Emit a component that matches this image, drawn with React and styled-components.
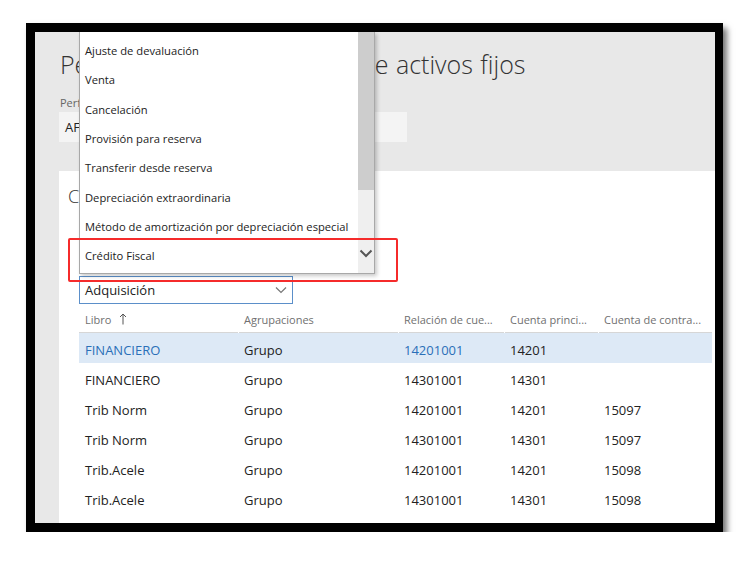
import React from 'react';
import styled, { createGlobalStyle } from 'styled-components';

const GlobalStyle = createGlobalStyle`
  body {
    margin: 0;
    background: #fff;
    font-family: "Open Sans", "Segoe UI", sans-serif;
    color: #222;
  }
`;

const menuItems = [
  'Ajuste de devaluación',
  'Venta',
  'Cancelación',
  'Provisión para reserva',
  'Transferir desde reserva',
  'Depreciación extraordinaria',
  'Método de amortización por depreciación especial',
  'Crédito Fiscal',
];

const columns = [
  { label: 'Libro', sort: true },
  { label: 'Agrupaciones' },
  { label: 'Relación de cue...' },
  { label: 'Cuenta princi...' },
  { label: 'Cuenta de contra...' },
];

const rows = [
  ['FINANCIERO', 'Grupo', '14201001', '14201', ''],
  ['FINANCIERO', 'Grupo', '14301001', '14301', ''],
  ['Trib Norm', 'Grupo', '14201001', '14201', '15097'],
  ['Trib Norm', 'Grupo', '14301001', '14301', '15097'],
  ['Trib.Acele', 'Grupo', '14201001', '14201', '15098'],
  ['Trib.Acele', 'Grupo', '14301001', '14301', '15098'],
];

export default function App() {
  return (
    <>
      <GlobalStyle />
      <Stage>
        <Frame>
          <Header>
            <Title>Perfiles de contabilización de activos fijos</Title>
            <FieldLabel>Perfil de contabilización</FieldLabel>
            <Input>AF01</Input>
          </Header>
          <Body>
            <Gutter />
            <Panel>
              <SectionTitle>Cuentas contables</SectionTitle>
              <Content>
                <Select>
                  <span>Adquisición</span>
                  <svg width="12" height="8" viewBox="0 0 12 8">
                    <path d="M1 1.5 L6 6.5 L11 1.5" fill="none" stroke="#777" strokeWidth="1.2" />
                  </svg>
                </Select>
                <Grid>
                  {columns.map((c, i) => (
                    <HeadCell key={c.label} first={i === 0}>
                      {c.label}
                      {c.sort && (
                        <SortArrow width="8" height="12" viewBox="0 0 8 12">
                          <path d="M4 11.5 V1 M1 4 L4 1 L7 4" fill="none" stroke="#555" strokeWidth="1" />
                        </SortArrow>
                      )}
                    </HeadCell>
                  ))}
                  {rows.map((r, ri) => (
                    <Row key={ri} selected={ri === 0}>
                      {r.map((v, ci) => (
                        <Cell key={ci} link={ri === 0 && (ci === 0 || ci === 2)}>
                          {v}
                        </Cell>
                      ))}
                    </Row>
                  ))}
                </Grid>
              </Content>
            </Panel>
          </Body>

          <Menu>
            <MenuList>
              {menuItems.map(m => (
                <MenuItem key={m}>{m}</MenuItem>
              ))}
            </MenuList>
            <ScrollBar>
              <Thumb />
              <ScrollDown>
                <svg width="14" height="9" viewBox="0 0 14 9">
                  <path d="M1.5 1.5 L7 7 L12.5 1.5" fill="none" stroke="#555" strokeWidth="2" />
                </svg>
              </ScrollDown>
            </ScrollBar>
          </Menu>
          <Highlight />
        </Frame>
      </Stage>
    </>
  );
}

const Stage = styled.div`
  padding: 23px 0 0 26px;
`;

const Frame = styled.div`
  position: relative;
  width: 680px;
  height: 491px;
  border: 9px solid #000;
  border-right-width: 8px;
  background: #e8e8e8;
  box-shadow: 4px 5px 6px rgba(0, 0, 0, 0.55);
  overflow: hidden;
  display: flex;
  flex-direction: column;
`;

const Header = styled.div`
  height: 139px;
  box-sizing: border-box;
  padding: 14px 0 0 24px;
  display: flex;
  flex-direction: column;
  align-items: flex-start;
`;

const Title = styled.div`
  font-size: 25px;
  font-weight: 300;
  word-spacing: 1px;
  line-height: 36px;
  color: #333;
  margin-left: 1px;
  white-space: nowrap;
`;

const FieldLabel = styled.div`
  margin-top: 14px;
  margin-left: 1px;
  font-size: 11px;
  color: #666;
  line-height: 14px;
`;

const Input = styled.div`
  margin-top: 2px;
  width: 348px;
  height: 30px;
  box-sizing: border-box;
  padding-left: 6px;
  background: #f4f4f4;
  font-size: 13px;
  line-height: 30px;
`;

const Body = styled.div`
  flex: 1;
  display: flex;
`;

const Gutter = styled.div`
  width: 24px;
`;

const Panel = styled.div`
  flex: 1;
  background: #fff;
  padding: 12px 3px 0 9px;
`;

const SectionTitle = styled.div`
  font-size: 18px;
  font-weight: 300;
  line-height: 26px;
  color: #333;
`;

const Content = styled.div`
  padding-left: 11px;
`;

const Select = styled.div`
  margin-top: 67px;
  width: 214px;
  height: 28px;
  box-sizing: border-box;
  border: 1px solid #5b8fc9;
  padding: 0 5px 0 5px;
  display: flex;
  align-items: center;
  justify-content: space-between;
  font-size: 13px;
  color: #222;
`;

const Grid = styled.div`
  display: grid;
  grid-template-columns: 159px 160px 106px 94px 114px;
`;

const HeadCell = styled.div`
  height: 29px;
  box-sizing: border-box;
  margin-left: ${p => (p.first ? '0' : '1px')};
  padding: 0 0 5px ${p => (p.first ? '6px' : '5px')};
  border-bottom: 1px solid #d6d6d6;
  display: flex;
  align-items: flex-end;
  font-size: 11px;
  color: #707070;
  white-space: nowrap;
`;

const SortArrow = styled.svg`
  margin: 0 0 2px 8px;
`;

const Row = styled.div`
  display: contents;
  & > div {
    background: ${p => (p.selected ? '#dde9f6' : 'transparent')};
  }
`;

const Cell = styled.div`
  height: 30px;
  padding: 3px 0 0 6px;
  box-sizing: border-box;
  display: flex;
  align-items: center;
  font-size: 13px;
  color: ${p => (p.link ? '#2a6fb8' : '#222')};
  white-space: nowrap;
`;

const Menu = styled.div`
  position: absolute;
  left: 44px;
  top: 0;
  width: 296px;
  height: 242px;
  box-sizing: border-box;
  background: #fff;
  border: 1px solid #a8a8a8;
  border-top: none;
  box-shadow: 2px 2px 4px rgba(0, 0, 0, 0.22);
  display: flex;
`;

const MenuList = styled.div`
  flex: 1;
  padding-top: 4px;
`;

const MenuItem = styled.div`
  height: 29.3px;
  padding-left: 5px;
  display: flex;
  align-items: center;
  font-size: 11.2px;
  color: #222;
  white-space: nowrap;
`;

const ScrollBar = styled.div`
  width: 16px;
  background: #efefef;
  display: flex;
  flex-direction: column;
`;

const Thumb = styled.div`
  height: 158px;
  background: #cdcdcd;
`;

const ScrollDown = styled.div`
  margin-top: auto;
  height: 30px;
  display: flex;
  justify-content: center;
  padding-top: 6px;
  box-sizing: border-box;
`;

const Highlight = styled.div`
  position: absolute;
  left: 33px;
  top: 206px;
  width: 330px;
  height: 44px;
  box-sizing: border-box;
  border: 2.5px solid #f52b2b;
  border-radius: 2px;
`;
